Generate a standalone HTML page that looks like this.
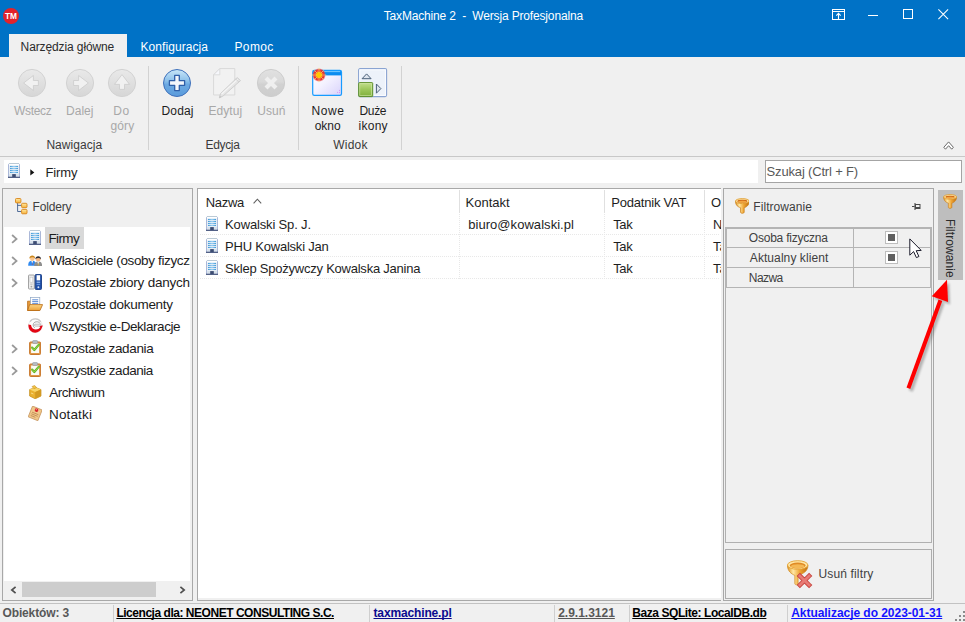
<!DOCTYPE html>
<html>
<head>
<meta charset="utf-8">
<title>TaxMachine 2</title>
<style>
*{box-sizing:border-box;margin:0;padding:0}
html,body{width:965px;height:622px;overflow:hidden;background:#f0f0f0;font-family:"Liberation Sans",sans-serif;font-size:13px;color:#1e1e1e}
.abs{position:absolute}
.t{position:absolute;white-space:nowrap;line-height:16px;height:16px;text-decoration-skip-ink:none}
.sep{position:absolute;width:1px;background:#d2d2d2}
.panel{position:absolute;border:1px solid #a8a8a8;background:#f0f0f0}
.white{position:absolute;background:#fff}
.dot{position:absolute;height:1px;background-image:linear-gradient(to right,#e8e8e8 50%,transparent 50%);background-size:2px 1px}
.vdot{position:absolute;width:1px;background-image:linear-gradient(to bottom,#e8e8e8 50%,transparent 50%);background-size:1px 2px}
.hs{position:absolute;width:1px;background:#e0e0e0;top:190px;height:23px}
.sd{position:absolute;width:1px;top:605px;height:17px;background:#cfcfcf}
.fl{position:absolute;background:#b4b4b4}
</style>
</head>
<body>
<svg width="0" height="0" style="position:absolute"><defs>
<linearGradient id="gGrey" x1="0" y1="0" x2="0" y2="1"><stop offset="0" stop-color="#e9e9e9"/><stop offset="1" stop-color="#d6d6d6"/></linearGradient>
<linearGradient id="gGrey2" x1="0" y1="0" x2="0" y2="1"><stop offset="0" stop-color="#e1e1e1"/><stop offset="0.45" stop-color="#d9d9d9"/><stop offset="0.55" stop-color="#d1d1d1"/><stop offset="1" stop-color="#cdcdcd"/></linearGradient>
<linearGradient id="gBlue" x1="0" y1="0" x2="0" y2="1"><stop offset="0" stop-color="#c9e7f8"/><stop offset="0.42" stop-color="#8cc0ea"/><stop offset="0.55" stop-color="#6ca9e2"/><stop offset="1" stop-color="#5a9bdb"/></linearGradient>
<linearGradient id="gWin" x1="0" y1="0" x2="1" y2="1"><stop offset="0" stop-color="#ffffff"/><stop offset="0.45" stop-color="#f4f2ff"/><stop offset="1" stop-color="#d8d2fb"/></linearGradient>
<linearGradient id="gGreen" x1="0" y1="0" x2="0" y2="1"><stop offset="0" stop-color="#c4df8c"/><stop offset="0.5" stop-color="#9cc65a"/><stop offset="1" stop-color="#7fae3c"/></linearGradient>
<linearGradient id="gGold" x1="0" y1="0" x2="1" y2="0"><stop offset="0" stop-color="#dc8f20"/><stop offset="0.28" stop-color="#ffe8a4"/><stop offset="0.6" stop-color="#efa534"/><stop offset="1" stop-color="#bf6c0e"/></linearGradient>
<linearGradient id="gBox" x1="0" y1="0" x2="0" y2="1"><stop offset="0" stop-color="#ffe9a4"/><stop offset="1" stop-color="#f7b23a"/></linearGradient>
<linearGradient id="gStripe" x1="0" y1="0" x2="1" y2="0"><stop offset="0" stop-color="#3f9ad8"/><stop offset="0.5" stop-color="#9fd0f2"/><stop offset="1" stop-color="#3f9ad8"/></linearGradient>
<linearGradient id="gFold" x1="0" y1="0" x2="0" y2="1"><stop offset="0" stop-color="#fcd684"/><stop offset="1" stop-color="#eda23a"/></linearGradient>
<linearGradient id="gBld" x1="0" y1="0" x2="1" y2="0"><stop offset="0" stop-color="#dbe9f8"/><stop offset="1" stop-color="#b8d2ee"/></linearGradient>
<radialGradient id="gStar"><stop offset="0" stop-color="#ffd000"/><stop offset="0.36" stop-color="#ffbe00"/><stop offset="0.46" stop-color="#ee3a28"/><stop offset="0.74" stop-color="#e8282e"/><stop offset="1" stop-color="#ee5a5a" stop-opacity="0"/></radialGradient>
<g id="bld">
 <rect x="0.4" y="0.9" width="11.2" height="13.6" fill="#e6eef6"/>
 <rect x="0.9" y="0.1" width="10.2" height="0.9" fill="#b4c4d2"/>
 <rect x="0.8" y="1" width="10.4" height="1.5" fill="#ffffff"/>
 <rect x="0" y="1.2" width="0.9" height="13" fill="#a3b2d4"/>
 <rect x="11.1" y="1.2" width="0.9" height="13" fill="#a3b2d4"/>
 <rect x="2" y="2.9" width="8" height="1.1" fill="url(#gStripe)"/>
 <rect x="2" y="4.9" width="8" height="1.1" fill="url(#gStripe)"/>
 <rect x="2" y="6.9" width="8" height="1.1" fill="url(#gStripe)"/>
 <rect x="2" y="8.9" width="8" height="1.1" fill="url(#gStripe)"/>
 <rect x="1.2" y="11" width="9.6" height="2.6" fill="#d6e0ea"/>
 <rect x="4.2" y="11.1" width="3.6" height="3" fill="#3c4c72"/>
 <rect x="0" y="13.7" width="12" height="1.2" fill="#42527a"/>
</g>
<g id="funnel">
 <path d="M0.5 3.2 C0.5 7.6 3.4 9 5.5 9.7 L5.5 14.2 C5.5 15.7 9.2 15.7 9.2 14.2 L9.2 9.7 C11.2 9 14.2 7.6 14.2 3.2 Z" fill="url(#gGold)" stroke="#c97c18" stroke-width="0.7"/>
 <ellipse cx="7.35" cy="3.1" rx="6.9" ry="2.5" fill="#ffe2a0" stroke="#dd9a2a" stroke-width="0.8"/>
 <ellipse cx="7.35" cy="3.3" rx="5" ry="1.5" fill="#cf6a1a"/>
 <ellipse cx="7.35" cy="3.8" rx="4.3" ry="1" fill="#f0a440"/>
</g>
<g id="clip">
 <rect x="0.5" y="2" width="11" height="12.5" rx="1" fill="#e09848" stroke="#c8782c" stroke-width="1"/>
 <rect x="2" y="3.5" width="8" height="9.5" fill="#fbfbf6"/>
 <rect x="3.5" y="0.6" width="5" height="2.8" rx="0.8" fill="#b9bec4" stroke="#8d949b" stroke-width="0.6"/>
 <path d="M3 7.6 L5.2 10 L9.8 4.6" fill="none" stroke="#5fae22" stroke-width="2.2" stroke-linecap="round" stroke-linejoin="round"/>
 <path d="M3 7.6 L5.2 10 L9.8 4.6" fill="none" stroke="#9be04a" stroke-width="0.9" stroke-linecap="round" stroke-linejoin="round"/>
</g>
</defs></svg>
<div class="abs" style="left:0;top:0;width:965px;height:57px;background:#0072c6"></div>
<div class="abs" style="left:9px;top:34px;width:118px;height:23px;background:#f0f0f0"></div>
<svg class="abs" style="left:3px;top:8px" width="16" height="16" viewBox="0 0 16 16"><circle cx="8" cy="8" r="8" fill="#e2222b"/><text x="2" y="11" font-family="Liberation Sans" font-weight="bold" font-size="8.4" fill="#fff" textLength="12" lengthAdjust="spacingAndGlyphs">TM</text></svg>
<svg class="abs" style="left:832px;top:9px" width="13" height="11" viewBox="0 0 13 11"><rect x="0.5" y="0.5" width="12" height="10" fill="none" stroke="#fff" stroke-width="1"/><path d="M0.5 2.5 H12.5" stroke="#fff" stroke-width="1"/><path d="M6.5 10 V4.4 M4.3 6.6 L6.5 4.4 L8.7 6.6" stroke="#fff" stroke-width="1.1" fill="none"/></svg>
<div class="abs" style="left:868px;top:15px;width:10px;height:1px;background:#fff"></div>
<div class="abs" style="left:903px;top:9px;width:10px;height:10px;border:1px solid #fff"></div>
<svg class="abs" style="left:938px;top:9px" width="10.5" height="10.5" viewBox="0 0 10.5 10.5"><path d="M0.4 0.4 L10.1 10.1 M10.1 0.4 L0.4 10.1" stroke="#fff" stroke-width="1.05"/></svg>
<div class="abs" style="left:0;top:156px;width:965px;height:1px;background:#c8c8c8"></div>
<div class="sep" style="left:148px;top:66px;height:84px"></div>
<div class="sep" style="left:298px;top:66px;height:84px"></div>
<div class="sep" style="left:401px;top:66px;height:84px"></div>
<svg class="abs" style="left:17.0px;top:67.7px" width="30" height="30" viewBox="0 0 30 30"><circle cx="15" cy="15" r="13.6" fill="url(#gGrey)" stroke="#d2d2d2" stroke-width="1"/><path d="M6.6 15 L16.4 7.5 L16.4 12.5 L21.4 12.5 L21.4 17.5 L16.4 17.5 L16.4 22.5 Z" fill="#f1f1f1" stroke="#cbcbcb" stroke-width="0.8" stroke-linejoin="miter"/></svg>
<svg class="abs" style="left:64.9px;top:67.7px" width="30" height="30" viewBox="0 0 30 30"><circle cx="15" cy="15" r="13.6" fill="url(#gGrey)" stroke="#d2d2d2" stroke-width="1"/><path d="M23.4 15 L13.6 7.5 L13.6 12.5 L8.6 12.5 L8.6 17.5 L13.6 17.5 L13.6 22.5 Z" fill="#f1f1f1" stroke="#cbcbcb" stroke-width="0.8" stroke-linejoin="miter"/></svg>
<svg class="abs" style="left:106.7px;top:67.7px" width="30" height="30" viewBox="0 0 30 30"><circle cx="15" cy="15" r="13.6" fill="url(#gGrey)" stroke="#d2d2d2" stroke-width="1"/><path d="M15 6.6 L22.5 16.4 L17.5 16.4 L17.5 21.4 L12.5 21.4 L12.5 16.4 L7.5 16.4 Z" fill="#f1f1f1" stroke="#cbcbcb" stroke-width="0.8" stroke-linejoin="miter"/></svg>
<svg class="abs" style="left:162.05px;top:67.7px" width="30" height="30" viewBox="0 0 30 30"><circle cx="15" cy="15" r="13.5" fill="url(#gBlue)" stroke="#3f70ba" stroke-width="1"/><path d="M12.7 7.4 h4.6 v5.3 h5.3 v4.6 h-5.3 v5.3 h-4.6 v-5.3 h-5.3 v-4.6 h5.3 z" fill="#f3f6fb" stroke="#2f5fa8" stroke-width="1.3" stroke-linejoin="round"/></svg>
<svg class="abs" style="left:212.6px;top:67.6px" width="30" height="31" viewBox="0 0 30 31"><path d="M6.8 0.6 H21.8 V27 H0.6 V6.8 Z" fill="#f2f2f2" stroke="#d9d9d9" stroke-width="1"/><path d="M0.6 6.8 H6.8 V0.6 Z" fill="#f6f7fb" stroke="#d9d9d9" stroke-width="0.9" stroke-linejoin="round"/><path d="M24.2 9.6 L27.5 12.6 L10.2 27.9 L6.3 29.9 L7.5 25.6 Z" fill="#e6e6e6" stroke="#cbcbcb" stroke-width="0.9" stroke-linejoin="round"/><path d="M24.6 11.4 L8.6 26" stroke="#f6f6f6" stroke-width="1.1"/><path d="M22.6 11 L25.9 14" stroke="#cbcbcb" stroke-width="0.8"/><path d="M6.3 29.9 L6.9 27.6 L8.4 28.9 Z" fill="#c4c4c4"/></svg>
<svg class="abs" style="left:256.06px;top:67.7px" width="30" height="30" viewBox="0 0 30 30"><circle cx="15" cy="15" r="13.6" fill="url(#gGrey2)" stroke="#cdcdcd" stroke-width="1"/><path d="M10 10 L20 20 M20 10 L10 20" stroke="#efefef" stroke-width="4.2" stroke-linecap="butt"/></svg>
<svg class="abs" style="left:308px;top:64px" width="38" height="34" viewBox="0 0 38 34"><rect x="4.7" y="6.4" width="28.8" height="25" rx="1.6" fill="url(#gWin)" stroke="#169bff" stroke-width="1.2"/><rect x="5.2" y="7" width="27.8" height="4.4" fill="#0c8cf0"/><rect x="6" y="7.2" width="26.2" height="0.9" fill="#86d2ff"/><circle cx="29.6" cy="28.4" r="0.55" fill="#d79af2"/><circle cx="31.5" cy="28.4" r="0.55" fill="#d79af2"/><circle cx="31.5" cy="26.4" r="0.55" fill="#d79af2"/><circle cx="11" cy="11" r="7" fill="url(#gStar)"/><path d="M11 3.8 V18.2 M3.8 11 H18.2 M6.4 6.4 L15.6 15.6 M15.6 6.4 L6.4 15.6" stroke="#fff27a" stroke-width="0.7" opacity="0.9"/><path d="M9.2 6.4 L12.8 15.6 M12.8 6.4 L9.2 15.6 M6.4 9.2 L15.6 12.8 M15.6 9.2 L6.4 12.8" stroke="#ffe860" stroke-width="0.5" opacity="0.7"/><circle cx="11" cy="11" r="2.7" fill="#ffc800"/></svg>
<svg class="abs" style="left:357.7px;top:67.6px" width="30" height="30" viewBox="0 0 30 30"><rect x="0.6" y="0.6" width="28" height="28" rx="1.5" fill="#edf2fa" stroke="#8aa4d2" stroke-width="1.1"/><rect x="1.8" y="1.8" width="25.6" height="25.6" fill="none" stroke="#fbfcff" stroke-width="1"/><rect x="0.7" y="14.6" width="14" height="14" rx="0.8" fill="url(#gGreen)" stroke="#5e8f2a" stroke-width="1"/><rect x="1.8" y="15.7" width="11.8" height="11.8" fill="none" stroke="#d6ebae" stroke-width="0.7" opacity="0.8"/><path d="M4.1 10.7 L8.6 5.9 L13.1 10.7 Z" fill="#dfe5ee" stroke="#4c6078" stroke-width="1" stroke-linejoin="round"/><path d="M18.4 16 L22.9 20.6 L18.4 25.2 Z" fill="#dfe5ee" stroke="#4c6078" stroke-width="1" stroke-linejoin="round"/></svg>
<svg class="abs" style="left:943px;top:141.4px" width="11.2" height="9.2" viewBox="0 0 11.2 9.2"><path d="M0.8 6.3 L5.6 0.9 L10.4 6.3 L8.7 8.2 L5.6 4.7 L2.5 8.2 Z" fill="#fff" stroke="#686868" stroke-width="1" stroke-linejoin="miter"/></svg>
<div class="white" style="left:4px;top:160px;width:754px;height:23px"></div>
<svg class="abs" style="left:8px;top:163px" width="12" height="15" viewBox="0 0 12 15"><use href="#bld"/></svg>
<svg class="abs" style="left:30px;top:168.5px" width="5" height="7" viewBox="0 0 5 7"><path d="M0.3 0.2 L4.3 3.4 L0.3 6.6 Z" fill="#111"/></svg>
<div class="abs" style="left:765px;top:160px;width:197px;height:23px;background:#fff;border:1px solid #a4a4a4"></div>
<div class="panel" style="left:2px;top:188px;width:191px;height:413px"></div>
<div class="white" style="left:4px;top:227px;width:186px;height:354px"></div>
<svg class="abs" style="left:14.8px;top:197.8px" width="13" height="17" viewBox="0 0 13 17"><path d="M2.6 5 V13.5 H6.4 M2.6 7.4 H6.4" fill="none" stroke="#3f5f8f" stroke-width="0.9"/><rect x="0.5" y="0.5" width="5.4" height="4.4" rx="0.9" fill="url(#gBox)" stroke="#d8861c" stroke-width="0.9"/><rect x="6.6" y="5.3" width="5.4" height="4.4" rx="0.9" fill="url(#gBox)" stroke="#d8861c" stroke-width="0.9"/><rect x="6.6" y="11.4" width="5.4" height="4.4" rx="0.9" fill="url(#gBox)" stroke="#d8861c" stroke-width="0.9"/></svg>
<div class="abs" style="left:45px;top:227px;width:39px;height:22px;background:#d9d9d9"></div>
<svg class="abs" style="left:29px;top:230px" width="12" height="15" viewBox="0 0 12 15"><use href="#bld"/></svg>
<svg class="abs" style="left:27.8px;top:254.7px" width="14.3" height="11" viewBox="0 0 14.3 11"><path d="M0.2 10.8 C0.2 6.6 1.8 5.8 4.2 5.8 C6.6 5.8 8 6.6 8 10.8 Z" fill="#2f8af0"/><path d="M3.4 5.9 L4.2 8.8 L5 5.9Z" fill="#fff"/><path d="M4.2 7 L3.9 9.4 L4.2 10 L4.5 9.4Z" fill="#d04030"/><circle cx="4.3" cy="3.6" r="2.4" fill="#fbc58e"/><path d="M1.4 3.6 C1 -0.6 7.4 -0.6 7.1 3.4 C5.8 1.8 3.2 2 1.4 3.6Z" fill="#c8861a"/><path d="M6.2 11 C6.2 7.2 7.8 6.4 10.2 6.4 C12.6 6.4 14.1 7.2 14.1 11 Z" fill="#8e8e8e"/><path d="M9.3 6.5 L10.2 9.4 L11.1 6.5Z" fill="#fff"/><path d="M10.2 7.2 L9.8 10 L10.2 10.7 L10.6 10Z" fill="#f0c020"/><circle cx="10.2" cy="4.2" r="2.4" fill="#f7b884"/><path d="M7.4 4.2 C7 0.2 13.4 0.2 13 4.2 C11.6 2.6 9 2.6 7.4 4.2Z" fill="#2c2c34"/></svg>
<svg class="abs" style="left:28px;top:274.1px" width="14" height="16" viewBox="0 0 14 16"><rect x="0.5" y="1" width="5.8" height="14" rx="0.8" fill="#ececec" stroke="#9a9a9a" stroke-width="0.9"/><rect x="2" y="3.2" width="2.8" height="5" fill="#fdfdfd" stroke="#bdbdbd" stroke-width="0.5"/><rect x="2.2" y="9.6" width="2.4" height="1.1" fill="#c2c2c2"/><circle cx="3.4" cy="12.6" r="0.9" fill="#a2a2a2"/><rect x="7.2" y="0.5" width="6.3" height="15" rx="0.9" fill="#1f4fa8" stroke="#163c86" stroke-width="0.9"/><path d="M8.6 1.2 H12.1 V6.4 H8.6 Z" fill="#fff"/><rect x="8.6" y="7.6" width="3.5" height="1.3" fill="#8fb6ee"/><rect x="8.6" y="9.8" width="3.5" height="1.3" fill="#5f8fdc"/><circle cx="10.35" cy="13.3" r="1" fill="#d6e4f8"/></svg>
<svg class="abs" style="left:27.1px;top:296.8px" width="16.2" height="14.3" viewBox="0 0 16.2 14.3"><path d="M0.6 4.2 H5.2 L6.4 5.6 H12 V13.4 H0.6 Z" fill="#e69a3c" stroke="#b86a14" stroke-width="0.8"/><rect x="3.6" y="0.5" width="9.2" height="9" fill="#fff" stroke="#8fa6c4" stroke-width="0.7"/><path d="M5.2 2.8 H11.2 M5.2 4.6 H11.2 M5.2 6.4 H11.2" stroke="#4c7fd0" stroke-width="0.9"/><path d="M0.6 13.5 L2.6 7.6 H15.6 L13 13.5 Z" fill="url(#gFold)" stroke="#b86a14" stroke-width="0.8" stroke-linejoin="round"/></svg>
<svg class="abs" style="left:27.7px;top:315.6px" width="15" height="17.2" viewBox="0 0 15 17.2"><circle cx="7.3" cy="9.8" r="6.9" fill="#fdfdfd" stroke="#dedede" stroke-width="0.6"/><path d="M2 5.6 C4.4 1.8 10.6 2 12.8 5.8" fill="none" stroke="#c9c9c9" stroke-width="1.4"/><path d="M0.4 8.6 C0 18.8 12 19 14 11.6 L14.8 9.4 L11.2 9.8 L12.2 11.2 C10 14.6 3.6 14.2 3 8.9 Z" fill="#e30613"/><path d="M12.2 7.6 C10.6 4.8 5.4 5.2 5.2 8.8 C5.2 10.4 5.9 11.3 6.8 11.8" fill="none" stroke="#8e8e8e" stroke-width="0.8"/><rect x="6.6" y="8.2" width="6.2" height="1.9" rx="0.6" fill="#f6f6f6" stroke="#8e8e8e" stroke-width="0.55"/></svg>
<svg class="abs" style="left:29px;top:340.2px" width="12.2" height="15" viewBox="0 0 12 15"><use href="#clip"/></svg>
<svg class="abs" style="left:29px;top:361.8px" width="12.2" height="15" viewBox="0 0 12 15"><use href="#clip"/></svg>
<svg class="abs" style="left:29px;top:384.6px" width="12.6" height="14.3" viewBox="0 0 12.6 14.3"><path d="M0.6 4.6 L6.2 2.4 L12 4.6 V11 L6.2 13.8 L0.6 11 Z" fill="#e9b030" stroke="#c08a18" stroke-width="0.7" stroke-linejoin="round"/><path d="M0.6 4.6 L6.2 7 L12 4.6 L6.2 2.4Z" fill="#f8d66a"/><path d="M6.2 7 V13.8 L12 11 V4.6Z" fill="#d39a22"/><path d="M3 1.6 L5.6 0.4 L7.6 2.6 L5 3.8Z" fill="#f2c247" stroke="#c08a18" stroke-width="0.5"/><path d="M2 8 L4.4 9 " stroke="#fbe39a" stroke-width="0.8"/></svg>
<svg class="abs" style="left:27.6px;top:406px" width="14.6" height="14.8" viewBox="0 0 14.6 14.8"><g transform="rotate(22 7.2 7.4)"><rect x="2" y="1.6" width="10.4" height="11.6" fill="#f0c88a" stroke="#c2905a" stroke-width="0.7"/><path d="M3.8 7.4 H10.6 M3.8 9.2 H10.6 M3.8 11 H8.8" stroke="#b8824c" stroke-width="0.7"/><circle cx="7.2" cy="3.8" r="1.8" fill="#d8242c"/><circle cx="6.7" cy="3.3" r="0.6" fill="#ff8a8a"/></g></svg>
<svg class="abs" style="left:11.4px;top:233.6px" width="7.5" height="10" viewBox="0 0 7.5 10"><path d="M1.1 1 L5.5 4.9 L1.1 8.8" fill="none" stroke="#9a9a9a" stroke-width="1.8"/></svg>
<svg class="abs" style="left:11.4px;top:255.6px" width="7.5" height="10" viewBox="0 0 7.5 10"><path d="M1.1 1 L5.5 4.9 L1.1 8.8" fill="none" stroke="#9a9a9a" stroke-width="1.8"/></svg>
<svg class="abs" style="left:11.4px;top:277.6px" width="7.5" height="10" viewBox="0 0 7.5 10"><path d="M1.1 1 L5.5 4.9 L1.1 8.8" fill="none" stroke="#9a9a9a" stroke-width="1.8"/></svg>
<svg class="abs" style="left:11.4px;top:343.6px" width="7.5" height="10" viewBox="0 0 7.5 10"><path d="M1.1 1 L5.5 4.9 L1.1 8.8" fill="none" stroke="#9a9a9a" stroke-width="1.8"/></svg>
<svg class="abs" style="left:11.4px;top:365.6px" width="7.5" height="10" viewBox="0 0 7.5 10"><path d="M1.1 1 L5.5 4.9 L1.1 8.8" fill="none" stroke="#9a9a9a" stroke-width="1.8"/></svg>
<div class="abs" style="left:4px;top:227px;width:186px;height:354px;overflow:hidden">
<div class="t" id="t1" style="left:44.5px;top:4px;font-size:13.5px;color:#1c1c1c;letter-spacing:-0.625px">Firmy</div>
<div class="t" id="t2" style="left:45.3px;top:26px;font-size:13.5px;color:#1c1c1c;letter-spacing:-0.359px">Właściciele (osoby fizyczne)</div>
<div class="t" id="t3" style="left:45.0px;top:48px;font-size:13.5px;color:#1c1c1c;letter-spacing:-0.245px">Pozostałe zbiory danych</div>
<div class="t" id="t4" style="left:45.0px;top:70px;font-size:13.5px;color:#1c1c1c;letter-spacing:-0.278px">Pozostałe dokumenty</div>
<div class="t" id="t5" style="left:45.3px;top:92px;font-size:13.5px;color:#1c1c1c;letter-spacing:-0.429px">Wszystkie e-Deklaracje</div>
<div class="t" id="t6" style="left:45.0px;top:114px;font-size:13.5px;color:#1c1c1c;letter-spacing:-0.350px">Pozostałe zadania</div>
<div class="t" id="t7" style="left:45.3px;top:136px;font-size:13.5px;color:#1c1c1c;letter-spacing:-0.494px">Wszystkie zadania</div>
<div class="t" id="t8" style="left:45.3px;top:158px;font-size:13.5px;color:#1c1c1c;letter-spacing:-0.500px">Archiwum</div>
<div class="t" id="t9" style="left:45.0px;top:180px;font-size:13.5px;color:#1c1c1c;letter-spacing:0.150px">Notatki</div>
</div>
<div class="abs" style="left:4px;top:581px;width:186px;height:17px;background:#f0f0f0"></div>
<div class="abs" style="left:22px;top:582px;width:134px;height:15px;background:#cdcdcd"></div>
<svg class="abs" style="left:9.6px;top:585.6px" width="7" height="8" viewBox="0 0 7 8"><path d="M5.6 0.8 L1.8 4 L5.6 7.2" fill="none" stroke="#505050" stroke-width="1.7"/></svg><svg class="abs" style="left:178.8px;top:585.6px" width="7" height="8" viewBox="0 0 7 8"><path d="M1.4 0.8 L5.2 4 L1.4 7.2" fill="none" stroke="#505050" stroke-width="1.7"/></svg>
<div class="panel" style="left:197px;top:188px;width:524px;height:413px;background:#fff;border-right:none"></div>
<div class="hs" style="left:459px"></div>
<div class="vdot" style="left:459px;top:214px;height:65px"></div>
<div class="hs" style="left:604px"></div>
<div class="vdot" style="left:604px;top:214px;height:65px"></div>
<div class="hs" style="left:704px"></div>
<div class="vdot" style="left:704px;top:214px;height:65px"></div>
<div class="dot" style="left:200px;top:234px;width:520px"></div>
<div class="dot" style="left:200px;top:256px;width:520px"></div>
<div class="dot" style="left:200px;top:278px;width:520px"></div>
<div class="abs" style="left:198px;top:598px;width:523px;height:2px;background:#f0f0f0"></div>
<svg class="abs" style="left:252.5px;top:198.2px" width="9" height="6" viewBox="0 0 9 6"><path d="M0.6 5.3 L4.4 1.2 L8.2 5.3" fill="none" stroke="#606060" stroke-width="1.1"/></svg>
<svg class="abs" style="left:206px;top:216px" width="12" height="15" viewBox="0 0 12 15"><use href="#bld"/></svg>
<svg class="abs" style="left:206px;top:238px" width="12" height="15" viewBox="0 0 12 15"><use href="#bld"/></svg>
<svg class="abs" style="left:206px;top:260px" width="12" height="15" viewBox="0 0 12 15"><use href="#bld"/></svg>
<div class="abs" style="left:705px;top:189px;width:16px;height:100px;overflow:hidden">
<div class="t" id="h4" style="left:6.0px;top:6px;font-size:13px;color:#1e1e1e">Osoba</div>
<div class="t" id="c14" style="left:8.0px;top:28px;font-size:13px;color:#1e1e1e">Nie</div>
<div class="t" id="c24" style="left:8.0px;top:50px;font-size:13px;color:#1e1e1e">Tak</div>
<div class="t" id="c34" style="left:8.0px;top:72px;font-size:13px;color:#1e1e1e">Tak</div>
</div>
<div class="panel" style="left:723px;top:188px;width:211px;height:413px"></div>
<svg class="abs" style="left:734.8px;top:197.6px" width="14.7" height="16" viewBox="0 0 14.7 16"><use href="#funnel"/></svg>
<svg class="abs" style="left:912px;top:203px" width="8.6" height="7" viewBox="0 0 8.6 7"><path d="M0 3.5 H2.6" stroke="#4a4a4a" stroke-width="1"/><path d="M3 0 V7" stroke="#4a4a4a" stroke-width="1.1"/><rect x="3.5" y="1.5" width="4.5" height="4" fill="none" stroke="#4a4a4a" stroke-width="1"/><rect x="3.5" y="4" width="4.5" height="2" fill="#4a4a4a"/></svg>
<div class="abs" style="left:725px;top:227px;width:207px;height:316px;border:1px solid #b0b0b0"></div>
<div class="fl" style="left:725px;top:227px;width:207px;height:2px"></div>
<div class="fl" style="left:725px;top:227px;width:2px;height:61px"></div>
<div class="fl" style="left:930px;top:227px;width:2px;height:61px"></div>
<div class="fl" style="left:725px;top:247px;width:207px;height:1px"></div>
<div class="fl" style="left:725px;top:267px;width:207px;height:1px"></div>
<div class="fl" style="left:725px;top:287px;width:207px;height:1px"></div>
<div class="fl" style="left:853px;top:228px;width:1px;height:60px"></div>
<div class="abs" style="left:885px;top:231px;width:13px;height:13px;background:#fff;border:1px solid #bdbdbd"></div>
<div class="abs" style="left:888px;top:234px;width:7px;height:7px;background:#606060"></div>
<div class="abs" style="left:885px;top:251px;width:13px;height:13px;background:#fff;border:1px solid #bdbdbd"></div>
<div class="abs" style="left:888px;top:254px;width:7px;height:7px;background:#606060"></div>
<div class="abs" style="left:725px;top:549px;width:207px;height:50px;border:1px solid #adadad"></div>
<svg class="abs" style="left:787px;top:559.6px" width="27" height="29" viewBox="0 0 27 29"><path d="M0.4 5 C0.4 11.4 4.4 13.8 7.8 15.4 L7.8 23.6 C7.8 25.2 11.1 25.2 11.1 23.6 L11.1 15.4 C16 13.8 21 11.4 21 5 Z" fill="url(#gGold)" stroke="#d28c22" stroke-width="0.7"/><ellipse cx="10.7" cy="5" rx="10.2" ry="4.3" fill="#ffe7a6" stroke="#e4a436" stroke-width="0.9"/><ellipse cx="10.7" cy="5.5" rx="8" ry="2.9" fill="#e08a24"/><ellipse cx="10.7" cy="6.2" rx="6.8" ry="2" fill="#f4b854"/><path d="M12.9 15.9 L22.1 25.1 M22.1 15.9 L12.9 25.1" stroke="#c8443e" stroke-width="4.6" stroke-linecap="square"/><path d="M12.9 15.9 L22.1 25.1 M22.1 15.9 L12.9 25.1" stroke="#e87a74" stroke-width="2.8" stroke-linecap="square"/></svg>
<div class="abs" style="left:938px;top:190px;width:25px;height:90px;background:#bebebe"></div>
<svg class="abs" style="left:943.3px;top:194.4px" width="14.2" height="15" viewBox="0 0 14.7 16"><use href="#funnel"/></svg>
<div class="t" id="vt" style="left:950px;top:218.5px;font-size:12px;color:#2c2c2c;transform-origin:0 0;transform:rotate(90deg);letter-spacing:0.060px;margin-left:8px">Filtrowanie</div>
<svg class="abs" style="left:908.5px;top:238.3px" width="13.5" height="21" viewBox="0 0 13.5 21"><path d="M0.8 0.9 V17.2 L4.6 13.6 L7.4 19.6 L9.9 18.5 L7.2 12.7 L12.2 12.4 Z" fill="#fff" stroke="#1a1a2a" stroke-width="1" stroke-linejoin="miter"/></svg>
<svg class="abs" style="left:0;top:0;pointer-events:none" width="965" height="622" viewBox="0 0 965 622"><defs><filter id="blur1" x="-20%" y="-20%" width="140%" height="140%"><feGaussianBlur stdDeviation="0.9"/></filter></defs><g transform="translate(2.2,2.6)" opacity="0.45" filter="url(#blur1)"><path d="M908.6 388.4 L940.4 300.2" stroke="#6c6c6c" stroke-width="4.2"/><path d="M947 280 L931.8 296.2 L948 302 Z" fill="#6c6c6c"/></g><path d="M908.4 388.2 L940.4 300.2" stroke="#ff0000" stroke-width="4"/><path d="M947 279.8 L931.8 296.2 L948 302 Z" fill="#ff0000"/></svg>
<div class="abs" style="left:0;top:603px;width:965px;height:1px;background:#c2c2c2"></div>
<div class="sd" style="left:113px"></div>
<div class="sd" style="left:369px"></div>
<div class="sd" style="left:554px"></div>
<div class="sd" style="left:629px"></div>
<div class="sd" style="left:787px"></div>
<svg class="abs" style="left:954.5px;top:611px" width="10" height="10" viewBox="0 0 10 10"><rect x="8" y="0" width="2" height="2" fill="#8a8a8a"/><rect x="4" y="4" width="2" height="2" fill="#8a8a8a"/><rect x="8" y="4" width="2" height="2" fill="#8a8a8a"/><rect x="0" y="8" width="2" height="2" fill="#8a8a8a"/><rect x="4" y="8" width="2" height="2" fill="#8a8a8a"/><rect x="8" y="8" width="2" height="2" fill="#8a8a8a"/></svg>
<div class="t" id="title" style="left:383.7px;top:8px;font-size:12px;color:#fff;letter-spacing:-0.161px">TaxMachine 2&nbsp; -&nbsp; Wersja Profesjonalna</div>
<div class="t" id="tl1" style="left:20.6px;top:39px;font-size:12px;color:#2b2b2b;letter-spacing:-0.113px">Narzędzia główne</div>
<div class="t" id="tl2" style="left:140.5px;top:39px;font-size:12px;color:#fff;letter-spacing:0.064px">Konfiguracja</div>
<div class="t" id="tl3" style="left:234.5px;top:39px;font-size:12px;color:#fff;letter-spacing:0.350px">Pomoc</div>
<div class="t" id="r1" style="left:14.1px;top:103px;font-size:12px;color:#a8a8a8;letter-spacing:-0.340px">Wstecz</div>
<div class="t" id="r2" style="left:66.0px;top:103px;font-size:12px;color:#a8a8a8;letter-spacing:0.025px">Dalej</div>
<div class="t" id="r3" style="left:113.3px;top:103px;font-size:12px;color:#a8a8a8;letter-spacing:0.500px">Do</div>
<div class="t" id="r3b" style="left:110.5px;top:118px;font-size:12px;color:#a8a8a8;letter-spacing:0.100px">góry</div>
<div class="t" id="r4" style="left:161.6px;top:103px;font-size:12px;color:#1e1e1e;letter-spacing:0.100px">Dodaj</div>
<div class="t" id="r5" style="left:208.4px;top:103px;font-size:12px;color:#a8a8a8;letter-spacing:0.080px">Edytuj</div>
<div class="t" id="r6" style="left:257.3px;top:103px;font-size:12px;color:#a8a8a8;letter-spacing:0.033px">Usuń</div>
<div class="t" id="r7" style="left:311.5px;top:103px;font-size:12px;color:#1e1e1e;letter-spacing:0.567px">Nowe</div>
<div class="t" id="r7b" style="left:314.7px;top:118px;font-size:12px;color:#1e1e1e;letter-spacing:-0.033px">okno</div>
<div class="t" id="r8" style="left:359.4px;top:103px;font-size:12px;color:#1e1e1e;letter-spacing:-0.300px">Duże</div>
<div class="t" id="r8b" style="left:358.5px;top:118px;font-size:12px;color:#1e1e1e;letter-spacing:0.275px">ikony</div>
<div class="t" id="g1" style="left:46.4px;top:137px;font-size:12px;color:#3a3a3a;letter-spacing:0.050px">Nawigacja</div>
<div class="t" id="g2" style="left:205.5px;top:137px;font-size:12px;color:#3a3a3a;letter-spacing:-0.340px">Edycja</div>
<div class="t" id="g3" style="left:333.2px;top:137px;font-size:12px;color:#3a3a3a;letter-spacing:0.225px">Widok</div>
<div class="t" id="addr" style="left:45.6px;top:165px;font-size:13px;color:#1e1e1e;letter-spacing:-0.175px">Firmy</div>
<div class="t" id="srch" style="left:766.6px;top:164px;font-size:13px;color:#585858;letter-spacing:-0.169px">Szukaj (Ctrl + F)</div>
<div class="t" id="fold" style="left:32.5px;top:199px;font-size:12px;color:#404040;letter-spacing:-0.150px">Foldery</div>
<div class="t" id="h1" style="left:205.8px;top:195px;font-size:13px;color:#1e1e1e;letter-spacing:-0.325px">Nazwa</div>
<div class="t" id="h2" style="left:465.6px;top:195px;font-size:13px;color:#1e1e1e;letter-spacing:-0.017px">Kontakt</div>
<div class="t" id="h3" style="left:611.2px;top:195px;font-size:13px;color:#1e1e1e;letter-spacing:-0.200px">Podatnik VAT</div>
<div class="t" id="c11" style="left:225.1px;top:217px;font-size:13px;color:#1e1e1e;letter-spacing:-0.157px">Kowalski Sp. J.</div>
<div class="t" id="c21" style="left:225.1px;top:239px;font-size:13px;color:#1e1e1e;letter-spacing:-0.220px">PHU Kowalski Jan</div>
<div class="t" id="c31" style="left:225.1px;top:261px;font-size:13px;color:#1e1e1e;letter-spacing:-0.233px">Sklep Spożywczy Kowalska Janina</div>
<div class="t" id="c12" style="left:468.2px;top:217px;font-size:13px;color:#1e1e1e;letter-spacing:0.050px">biuro@kowalski.pl</div>
<div class="t" id="c13" style="left:613.2px;top:217px;font-size:13px;color:#1e1e1e;letter-spacing:-0.350px">Tak</div>
<div class="t" id="c23" style="left:613.2px;top:239px;font-size:13px;color:#1e1e1e;letter-spacing:-0.350px">Tak</div>
<div class="t" id="c33" style="left:613.2px;top:261px;font-size:13px;color:#1e1e1e;letter-spacing:-0.350px">Tak</div>
<div class="t" id="f0" style="left:753.3px;top:199px;font-size:12px;color:#404040;letter-spacing:0.060px">Filtrowanie</div>
<div class="t" id="f1" style="left:748.8px;top:230px;font-size:12px;color:#404040;letter-spacing:-0.223px">Osoba fizyczna</div>
<div class="t" id="f2" style="left:749.8px;top:250px;font-size:12px;color:#404040;letter-spacing:0.079px">Aktualny klient</div>
<div class="t" id="f3" style="left:748.8px;top:270px;font-size:12px;color:#404040;letter-spacing:-0.575px">Nazwa</div>
<div class="t" id="fb" style="left:818.4px;top:566px;font-size:12px;color:#404040;letter-spacing:0.160px">Usuń filtry</div>
<div class="t" id="s1" style="left:2.5px;top:605px;font-size:12px;color:#585858;letter-spacing:-0.140px;font-weight:bold">Obiektów: 3</div>
<div class="t" id="s2" style="left:116.4px;top:605px;font-size:12px;color:#000;letter-spacing:-0.469px;font-weight:bold;text-decoration:underline">Licencja dla: NEONET CONSULTING S.C.</div>
<div class="t" id="s3" style="left:373.5px;top:605px;font-size:12px;color:#0b0b8e;letter-spacing:-0.142px;font-weight:bold;text-decoration:underline">taxmachine.pl</div>
<div class="t" id="s4" style="left:558.2px;top:605px;font-size:12px;color:#585858;letter-spacing:-0.011px;font-weight:bold;text-decoration:underline">2.9.1.3121</div>
<div class="t" id="s5" style="left:632.3px;top:605px;font-size:12px;color:#000;letter-spacing:-0.432px;font-weight:bold;text-decoration:underline">Baza SQLite: LocalDB.db</div>
<div class="t" id="s6" style="left:791.2px;top:605px;font-size:12px;color:#1414ff;letter-spacing:-0.040px;font-weight:bold;text-decoration:underline">Aktualizacje do 2023-01-31</div>
</body>
</html>
